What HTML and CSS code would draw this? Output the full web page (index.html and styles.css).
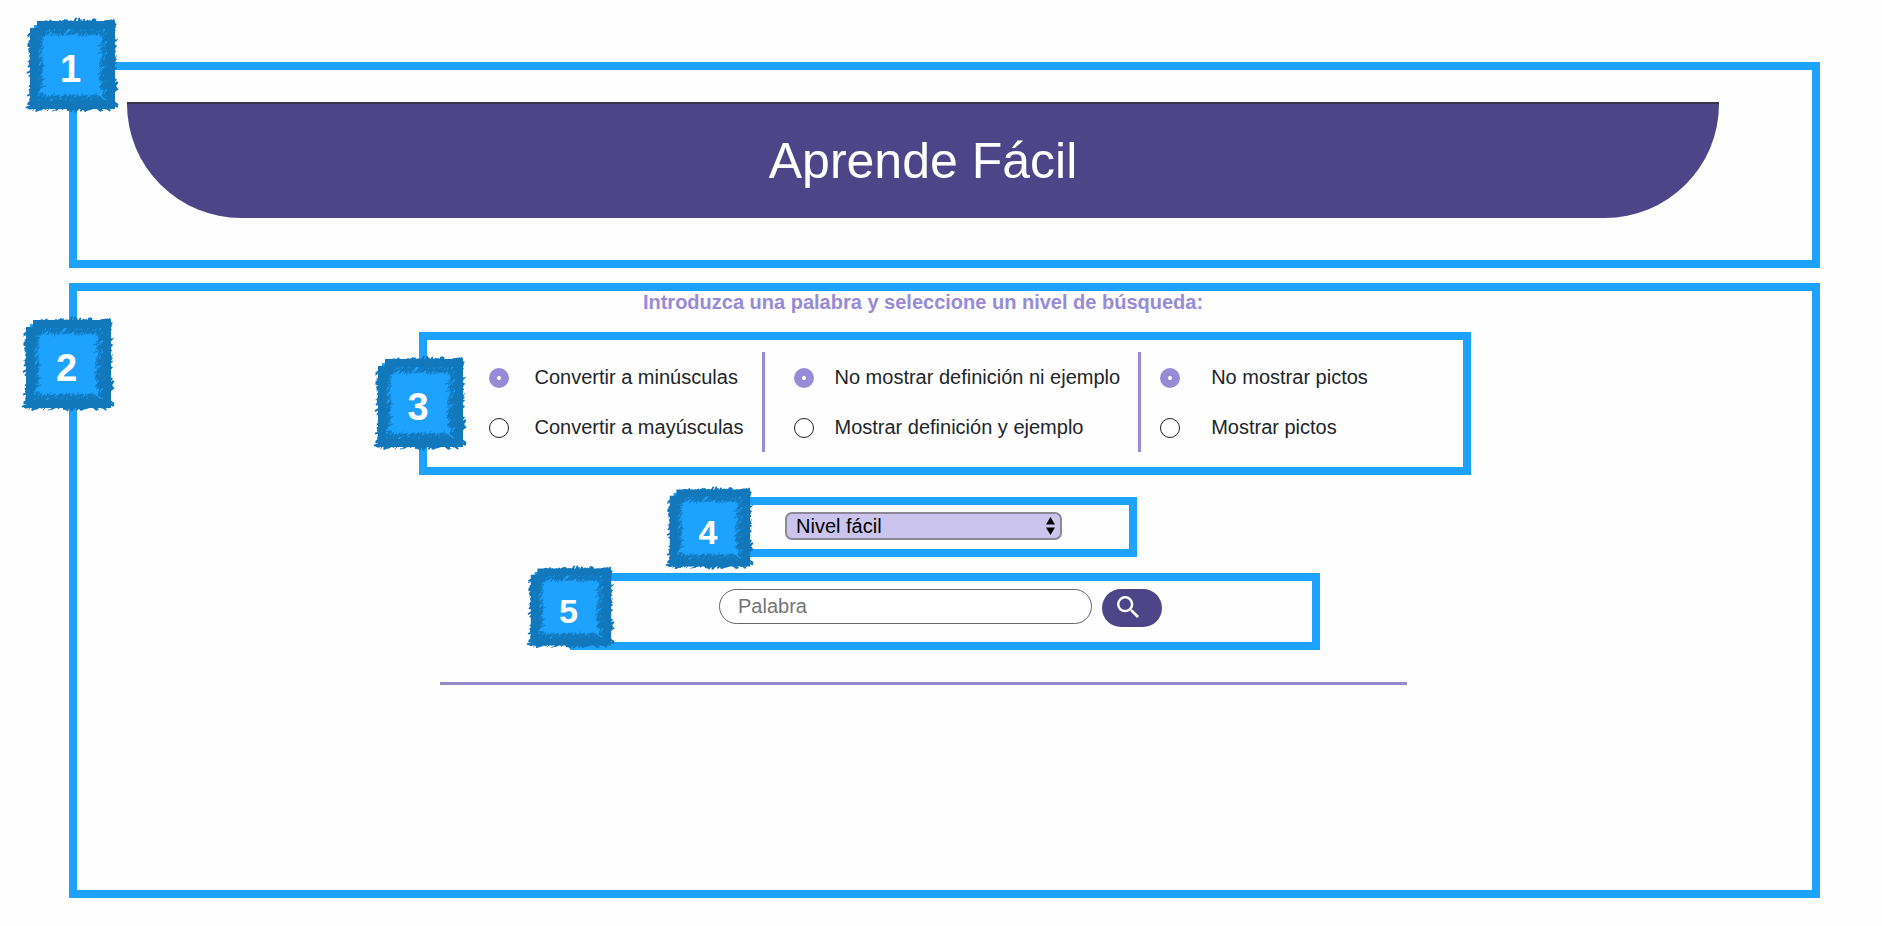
FILE: index.html
```html
<!DOCTYPE html>
<html lang="es">
<head>
<meta charset="utf-8">
<title>Aprende Fácil</title>
<link rel="stylesheet" href="styles.css">
</head>
<body>
<header class="frame frame-header">
  <span class="badge badge-1"><svg class="badge-art" viewBox="0 0 92 96" preserveAspectRatio="none" aria-hidden="true"></svg><span class="badge-number">1</span></span>
  <h1 class="title">Aprende Fácil</h1>
</header>

<main class="frame frame-main">
  <span class="badge badge-2"><svg class="badge-art" viewBox="0 0 92 96" preserveAspectRatio="none" aria-hidden="true"></svg><span class="badge-number">2</span></span>
  <p class="intro">Introduzca una palabra y seleccione un nivel de búsqueda:</p>

  <form class="search">
    <section class="frame frame-options">
      <span class="badge badge-3"><svg class="badge-art" viewBox="0 0 92 96" preserveAspectRatio="none" aria-hidden="true"></svg><span class="badge-number">3</span></span>
      <div class="options options-case">
        <label class="option"><input class="radio" type="radio" name="case" checked>Convertir a minúsculas</label>
        <label class="option"><input class="radio" type="radio" name="case">Convertir a mayúsculas</label>
      </div>
      <div class="options options-definition">
        <label class="option"><input class="radio" type="radio" name="definition" checked>No mostrar definición ni ejemplo</label>
        <label class="option"><input class="radio" type="radio" name="definition">Mostrar definición y ejemplo</label>
      </div>
      <div class="options options-pictos">
        <label class="option"><input class="radio" type="radio" name="pictos" checked>No mostrar pictos</label>
        <label class="option"><input class="radio" type="radio" name="pictos">Mostrar pictos</label>
      </div>
    </section>

    <section class="frame frame-level">
      <span class="badge badge-4"><svg class="badge-art" viewBox="0 0 92 96" preserveAspectRatio="none" aria-hidden="true"></svg><span class="badge-number">4</span></span>
      <div class="level">
        <select class="level-select" aria-label="Nivel de búsqueda"><option>Nivel fácil</option></select>
        <svg class="level-arrows" viewBox="0 0 9 18" aria-hidden="true"><path d="M4.500 0 9 7.500H0zM0 10.500h9L4.500 18z"/></svg>
      </div>
    </section>

    <section class="frame frame-word">
      <span class="badge badge-5"><svg class="badge-art" viewBox="0 0 92 96" preserveAspectRatio="none" aria-hidden="true"></svg><span class="badge-number">5</span></span>
      <input class="word" type="text" placeholder="Palabra" aria-label="Palabra">
      <button class="submit" type="button" aria-label="Buscar">
        <svg class="submit-icon" viewBox="3 3 17.500 17.500" aria-hidden="true"><path d="M15.500 14h-.79l-.28-.27A6.471 6.471 0 0 0 16 9.500 6.500 6.500 0 1 0 9.500 16c1.610 0 3.090-.59 4.230-1.570l.27.28v.79l5 4.990L20.490 19l-4.990-5zm-6 0C7.010 14 5 11.990 5 9.500S7.010 5 9.500 5 14 7.010 14 9.500 11.990 14 9.500 14z"/></svg>
      </button>
    </section>

    <hr class="divider">
  </form>
</main>
<script src="badges.js"></script>
</body>
</html>
```

FILE: styles.css
```css
* { box-sizing: border-box; }

body {
  display: flex;
  flex-direction: column;
  gap: 15px;
  min-height: 100vh;
  margin: 0;
  padding: 62px 62px 28px 69px;
  background: #fefefe;
  color: #212529;
  font: 20px/24px "Liberation Sans", Arial, sans-serif;
}

.frame {
  position: relative;
  border: 8px solid #1ea2ff;
}

.frame-header { padding: 32px 93px 42px 50px; }

.title {
  margin: 0;
  padding: 26px 0;
  border-top: 2px solid #373545;
  border-radius: 0 0 114px 114px;
  background: #4d4587;
  color: #fff;
  font-size: 50px;
  font-weight: 400;
  line-height: 62px;
  text-align: center;
}

.frame-main { flex: 1; }

.intro {
  margin: 0 0 19px;
  padding-right: 43px;
  color: #978bd8;
  font-weight: 700;
  line-height: 22px;
  text-align: center;
}

.search {
  display: flex;
  flex-direction: column;
  align-items: center;
}

.frame-options {
  display: flex;
  width: 1052px;
  max-width: 100%;
  padding: 12px 0 15px 62px;
}

.options { display: grid; }

.options-case {
  padding-right: 19px;
  border-right: 3px solid #978bd8;
}

.options-definition {
  padding: 0 18px 0 29px;
  border-right: 3px solid #978bd8;
}

.options-pictos { padding-left: 19px; }

.option {
  display: flex;
  align-items: center;
  gap: 20px;
  height: 50px;
  white-space: nowrap;
}

.options-case .option { gap: 26px; }
.options-pictos .option { gap: 31px; }

.radio {
  flex: none;
  appearance: none;
  width: 20px;
  height: 20px;
  margin: 2px 0 0;
  border: 1px solid #222;
  border-radius: 50%;
  background: #fff;
}

.radio:checked { border: 8px solid #978bd8; }

.frame-level {
  width: 427px;
  margin: 22px 42px 0 0;
  padding: 7px 67px 9px;
}

.level {
  display: grid;
  align-items: center;
}

.level-select {
  grid-area: 1 / 1;
  appearance: none;
  height: 28px;
  padding: 0 9px 2px;
  border: 2px solid #8c8994;
  border-radius: 7px;
  background: #cbc5ee;
  color: #000;
  font: inherit;
}

.level-arrows {
  grid-area: 1 / 1;
  justify-self: end;
  width: 9px;
  height: 18px;
  margin-right: 7px;
  pointer-events: none;
}

.frame-word {
  display: flex;
  justify-content: center;
  align-items: flex-start;
  gap: 10px;
  width: 750px;
  max-width: 100%;
  margin-top: 16px;
  padding: 8px 8px 15px 0;
}

.word {
  width: 373px;
  height: 35px;
  padding: 0 18px 1px;
  border: 1px solid #666;
  border-radius: 18px;
  background: #fff;
  color: #212529;
  font: inherit;
}

.word::placeholder { color: #757575; }

.submit {
  width: 60px;
  height: 38px;
  padding: 0 8px 2px 0;
  border: 0;
  border-radius: 19px;
  background: #4d4587;
}

.submit-icon {
  display: block;
  width: 22px;
  height: 22px;
  margin: 0 auto;
  fill: #fff;
}

.divider {
  width: 967px;
  max-width: 100%;
  height: 3px;
  margin: 32px 42px 0 0;
  border: 0;
  background: #958bcb;
}

.badge {
  position: absolute;
  display: grid;
  grid-template: 100% / 100%;
  place-items: center;
  width: 92px;
  height: 96px;
  color: #fff;
  font-size: 38px;
  font-weight: 700;
  line-height: 40px;
}

.badge-art {
  grid-area: 1 / 1;
  width: 100%;
  height: 100%;
  overflow: visible;
}

.badge-number {
  grid-area: 1 / 1;
  padding: 8px 3px 0 0;
}

.badge-fill { fill: #1ea2ff; }
.badge-band { fill: none; stroke: #1278bb; }
.badge-strokes { fill: none; stroke: #1278bb; stroke-linecap: round; }

.badge-1 { top: -53px; left: -51px; }
.badge-2 { top: 25px; left: -55px; }
.badge-3 { top: 15px; left: -53px; }
.badge-4, .badge-5 { width: 87px; height: 84px; font-size: 34px; }
.badge-4 { top: -19px; left: -52px; }
.badge-5 { top: -16px; left: -51px; }
```

FILE: badges.js
```
// Draws the crayon-like edge of every numbered badge.
(function () {
  var seed = 90211;
  function rnd() {
    seed = (seed * 16807) % 2147483647;
    return seed / 2147483647;
  }

  function stroke(x, y, angle, length) {
    var dx = Math.cos(angle) * length / 2;
    var dy = -Math.sin(angle) * length / 2;
    return "M" + (x - dx).toFixed(1) + " " + (y - dy).toFixed(1) +
      "L" + (x + dx).toFixed(1) + " " + (y + dy).toFixed(1);
  }

  var thick = "";
  var thin = "";
  function add(x, y, fine) {
    var angle = 0.8 + (rnd() - 0.5) * 1.3;
    if (x > 68 && y > 78) angle = 2.4 + rnd() * 0.3;
    if (!fine && rnd() < 0.6) thick += stroke(x, y, angle, 3 + rnd() * 5);
    else thin += stroke(x, y, angle, 3 + rnd() * 5);
  }

  for (var i = 0; i < 110; i++) {
    add(14 + rnd() * 74, 4 + rnd() * 9);
    add(5 + rnd() * 80, 83 + rnd() * 10);
    add(4 + rnd() * 8, 13 + rnd() * 78);
    add(79 + rnd() * 10, 5 + rnd() * 86);
    add(14 + rnd() * 62, 13 + rnd() * 4, true);
    add(14 + rnd() * 62, 79 + rnd() * 4, true);
    add(11 + rnd() * 5, 15 + rnd() * 66, true);
    add(75 + rnd() * 5, 15 + rnd() * 66, true);
  }

  var art = '<rect class="badge-fill" x="8" y="8" width="76" height="80"/>' +
    '<path class="badge-band" d="M15 8H85V88H8V15H15Z" stroke-width="8"/>' +
    '<path class="badge-strokes" stroke-width="2" d="' + thick + '"/>' +
    '<path class="badge-strokes" stroke-width="0.900" d="' + thin + '"/>';

  document.querySelectorAll(".badge-art").forEach(function (svg) {
    svg.innerHTML = art;
  });
})();
```
